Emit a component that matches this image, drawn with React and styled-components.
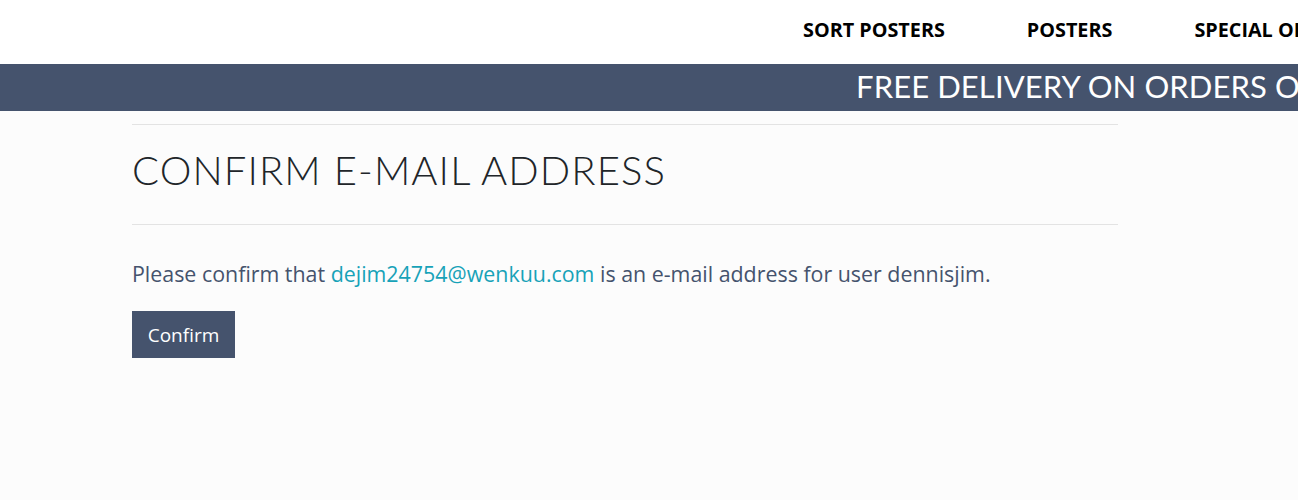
import styled, { createGlobalStyle } from 'styled-components';

const GlobalStyle = createGlobalStyle`
  html, body {
    margin: 0;
    padding: 0;
    background: #fcfcfc;
    overflow-x: hidden;
  }
  body {
    font-family: "Open Sans", "Noto Sans", sans-serif;
  }
`;

const Header = styled.header`
  background: #ffffff;
  height: 64px;
  display: flex;
  align-items: center;
  padding-left: 803px;
  padding-bottom: 6px;
  box-sizing: border-box;
  white-space: nowrap;
  overflow: hidden;
`;

const NavMenu = styled.nav`
  display: flex;
  align-items: center;
  gap: 82px;
`;

const NavItem = styled.a`
  color: #000000;
  font-family: "Open Sans", sans-serif;
  font-weight: 700;
  font-size: 19.8px;
  text-decoration: none;
  cursor: pointer;
`;

const Banner = styled.div`
  background: #45536d;
  height: 47px;
  display: flex;
  align-items: center;
  padding-left: 856px;
  padding-bottom: 3px;
  box-sizing: border-box;
  white-space: nowrap;
  overflow: hidden;
`;

const BannerText = styled.span`
  color: #ffffff;
  font-family: "Lato", sans-serif;
  font-size: 31px;
  font-weight: 400;
  letter-spacing: 0.1px;
`;

const Main = styled.main`
  width: 986px;
  margin: 0 0 0 132px;
  padding-top: 13px;
  padding-bottom: 140px;
`;

const Rule = styled.hr`
  border: 0;
  border-top: 1px solid #e3e3e3;
  margin: 0;
`;

const Title = styled.h1`
  font-family: "Lato", sans-serif;
  font-weight: 300;
  font-size: 40px;
  color: #212529;
  margin: 0;
  padding: 22px 0 31px;
  line-height: 46px;
  letter-spacing: 1.1px;
`;

const Text = styled.p`
  font-family: "Open Sans", sans-serif;
  font-size: 21.4px;
  color: #45536d;
  margin: 34px 0 22px;
  line-height: 30px;
`;

const Link = styled.a`
  color: #17a2b8;
  text-decoration: none;
`;

const Button = styled.button`
  background: #45536d;
  color: #ffffff;
  border: 0;
  border-radius: 0;
  font-family: "Open Sans", sans-serif;
  font-size: 19px;
  height: 47px;
  width: 103px;
  padding: 0;
  cursor: pointer;
`;

export default function App() {
  return (
    <>
      <GlobalStyle />
      <Header>
        <NavMenu>
          <NavItem>SORT POSTERS</NavItem>
          <NavItem>POSTERS</NavItem>
          <NavItem>SPECIAL OFFERS</NavItem>
        </NavMenu>
      </Header>
      <Banner>
        <BannerText>FREE DELIVERY ON ORDERS OVER</BannerText>
      </Banner>
      <Main>
        <Rule />
        <Title>CONFIRM E-MAIL ADDRESS</Title>
        <Rule />
        <Text>
          Please confirm that <Link href="#">dejim24754@wenkuu.com</Link> is an e-mail address for user dennisjim.
        </Text>
        <Button>Confirm</Button>
      </Main>
    </>
  );
}
